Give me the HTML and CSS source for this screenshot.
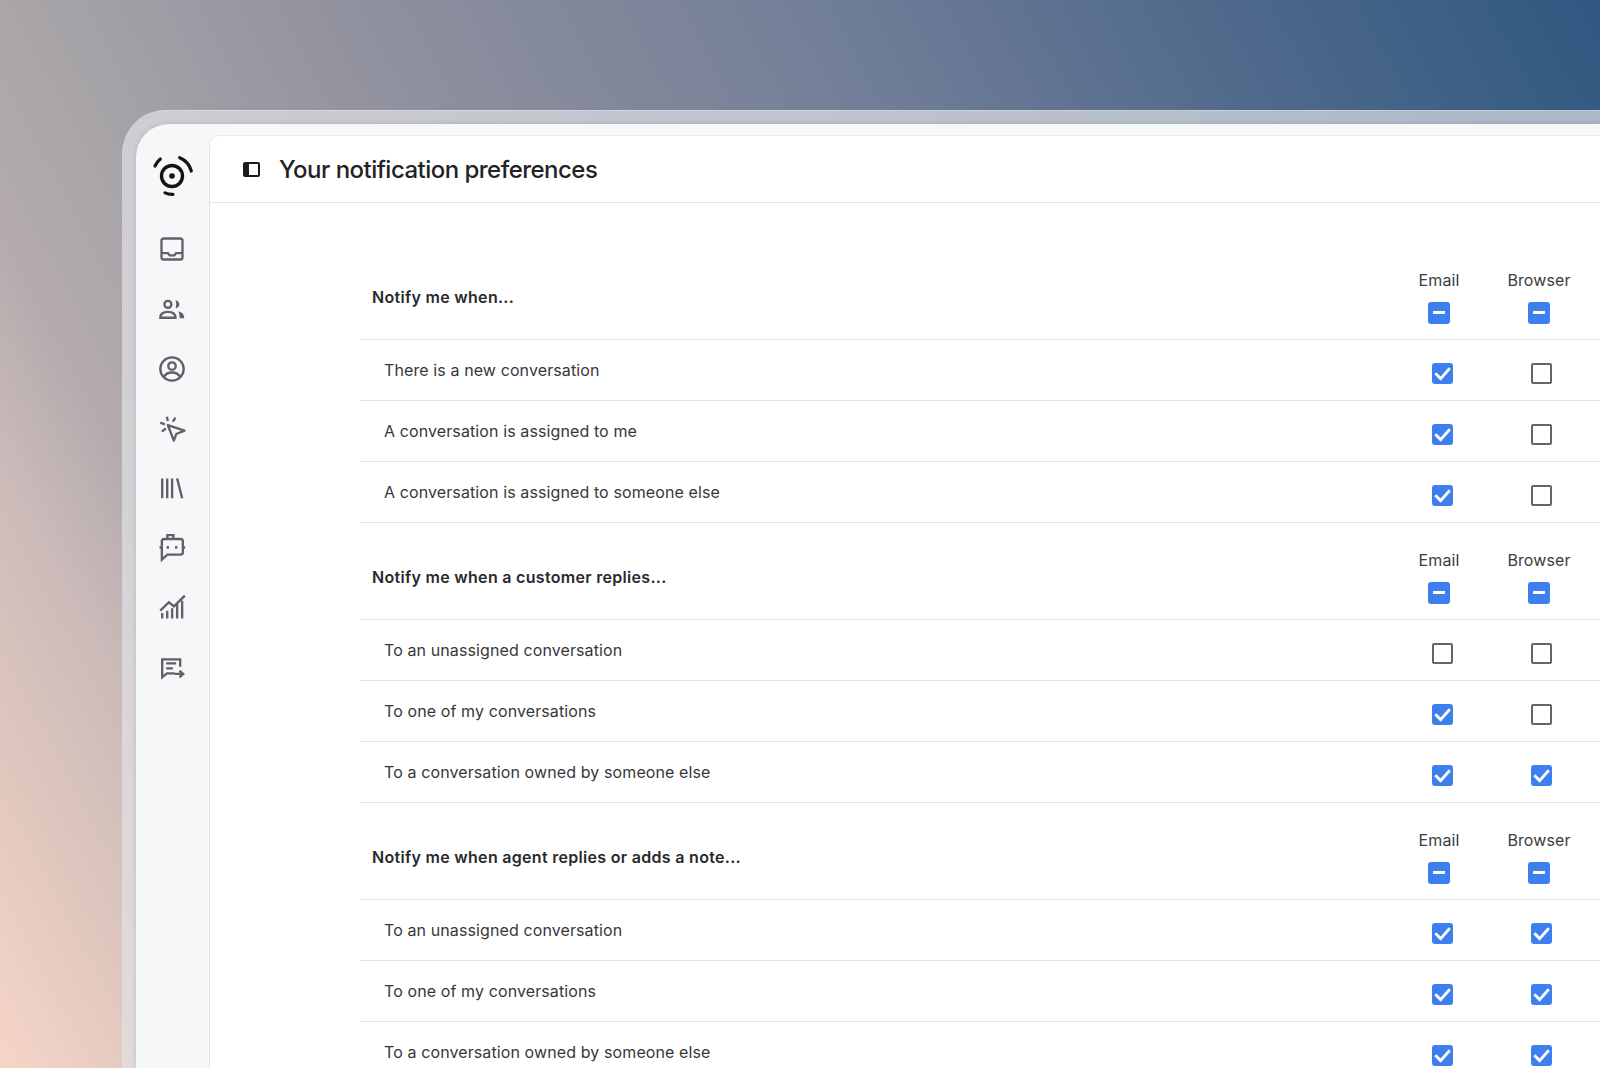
FILE: index.html
```html
<!DOCTYPE html>
<html lang="en">
<head>
<meta charset="utf-8">
<title>Your notification preferences</title>
<link rel="stylesheet" href="styles.css">
</head>
<body>
<svg class="defs" aria-hidden="true">
  <symbol id="tick" viewBox="0 0 21 21"><path d="M3.300 10.300l5.300 5.300L17.800 5.300" fill="none" stroke="#fff" stroke-width="2.800"/></symbol>
</svg>
<div class="frame">
  <div class="app">
    <nav class="sidebar">
      <svg class="logo" viewBox="-22 -22 44 44" fill="none" stroke="#141416" stroke-linecap="round">
        <circle r="10.500" stroke-width="3.400"/>
        <circle r="2.800" fill="#141416" stroke="none"/>
        <path d="M7.700-18.300A20 20 0 0 1 19.300-5" stroke-width="3.200"/>
        <path d="M-17-10A20 20 0 0 1-11.700-17" stroke-width="3.200"/>
        <path d="M-7 16.900A18 18 0 0 0 1 18.300" stroke-width="3.200"/>
      </svg>
      <svg class="icon" viewBox="0 0 24 24"><rect x="3" y="3" width="18" height="18" rx="2"/><path d="M3 15.500h5.500l1.500 2h4l1.500-2H21"/></svg>
      <svg class="icon" viewBox="0 0 24 24"><circle cx="8.500" cy="8" r="3"/><path d="M2 19.500c0-3.500 3-5 6.500-5s6.500 1.500 6.500 5z"/><path d="M15 4.500c2.200 .5 3.300 1.800 3.300 3.500s-1.100 3-3.300 3.500c.8-2.300 .8-4.700 0-7z" class="solid"/><path d="M17.500 14c3 .8 5 2.500 5 6h-4c0-2.500-.2-4-1-6z" class="solid"/></svg>
      <svg class="icon" viewBox="0 0 24 24"><circle cx="12" cy="12" r="10"/><circle cx="12" cy="9.500" r="3.200"/><path d="M5 19c1.500-3 4-4 7-4s5.500 1 7 4"/></svg>
      <svg class="icon" viewBox="0 0 24 24"><path d="M8.400 8.600l14.300 4.800-7.100 2.900-2 5.700z" stroke-linejoin="round"/><path d="M7.600 1.400l.8 3.700M1.900 6.600l4 1.400M3.300 14.300l3.400-2.900M15 2.300l-2.300 3.400"/></svg>
      <svg class="icon" viewBox="0 0 24 24"><path d="M3.600 2.900V20M7.900 2.900V20M12.100 2.900V20M16.400 2.900L20.700 20"/></svg>
      <svg class="icon" viewBox="0 0 24 24"><path d="M5 4.300h14.300a2 2 0 0 1 2 2v9.400a2 2 0 0 1-2 2H8L3.300 22V6.300a2 2 0 0 1 2-2z"/><path d="M8 4.300V.9h5.200v3.400M1.300 11.600h2M21.300 11.600h2M8.400 10.200v2.400M15.600 10.200v2.400"/></svg>
      <svg class="icon" viewBox="0 0 24 24"><path d="M1.900 14.300l7.500-7.200 4.300 3.500L23 1.400M3.600 16.300v4.600M7.900 14.300v6.600M12.100 12.300v8.600M16.400 8.600v12.300M20.700 5.700v15.200"/></svg>
      <svg class="icon" viewBox="0 0 24 24"><path d="M19 10.900V4.600H3.600V20l4-3.400h6.500M7 8h8.600M7 12.300h5.700M14.100 17.100h7.200M18.400 14.300l3.200 2.800-3.200 2.900"/></svg>
    </nav>
    <main class="panel">
      <header class="topbar">
        <span class="toggle"><span class="toggle-fill"></span></span>
        <h1 class="title">Your notification preferences</h1>
      </header>
      <div class="content">

        <section class="group">
          <div class="head">
            <div class="head-label">Notify me when...</div>
            <div class="col"><span>Email</span><span class="cb on"><i class="dash"></i></span></div>
            <div class="col"><span>Browser</span><span class="cb on"><i class="dash"></i></span></div>
          </div>
          <div class="row"><div class="label">There is a new conversation</div><span class="cb on"><svg><use href="#tick"/></svg></span><span class="cb"></span></div>
          <div class="row"><div class="label">A conversation is assigned to me</div><span class="cb on"><svg><use href="#tick"/></svg></span><span class="cb"></span></div>
          <div class="row"><div class="label">A conversation is assigned to someone else</div><span class="cb on"><svg><use href="#tick"/></svg></span><span class="cb"></span></div>
        </section>

        <section class="group">
          <div class="head">
            <div class="head-label">Notify me when a customer replies...</div>
            <div class="col"><span>Email</span><span class="cb on"><i class="dash"></i></span></div>
            <div class="col"><span>Browser</span><span class="cb on"><i class="dash"></i></span></div>
          </div>
          <div class="row"><div class="label">To an unassigned conversation</div><span class="cb"></span><span class="cb"></span></div>
          <div class="row"><div class="label">To one of my conversations</div><span class="cb on"><svg><use href="#tick"/></svg></span><span class="cb"></span></div>
          <div class="row"><div class="label">To a conversation owned by someone else</div><span class="cb on"><svg><use href="#tick"/></svg></span><span class="cb on"><svg><use href="#tick"/></svg></span></div>
        </section>

        <section class="group">
          <div class="head">
            <div class="head-label">Notify me when agent replies or adds a note...</div>
            <div class="col"><span>Email</span><span class="cb on"><i class="dash"></i></span></div>
            <div class="col"><span>Browser</span><span class="cb on"><i class="dash"></i></span></div>
          </div>
          <div class="row"><div class="label">To an unassigned conversation</div><span class="cb on"><svg><use href="#tick"/></svg></span><span class="cb on"><svg><use href="#tick"/></svg></span></div>
          <div class="row"><div class="label">To one of my conversations</div><span class="cb on"><svg><use href="#tick"/></svg></span><span class="cb on"><svg><use href="#tick"/></svg></span></div>
          <div class="row"><div class="label">To a conversation owned by someone else</div><span class="cb on"><svg><use href="#tick"/></svg></span><span class="cb on"><svg><use href="#tick"/></svg></span></div>
        </section>

      </div>
    </main>
  </div>
</div>
</body>
</html>
```
FILE: styles.css
```css
* { box-sizing: border-box; }
html, body { margin: 0; height: 100%; overflow: hidden; }
body {
  font-family: Inter, "Liberation Sans", sans-serif;
  color: #29292c;
  padding: 110px 0 0 122px;
  background: linear-gradient(62deg, #f7d5c8 0%, #e3c9bf 6.600%, #c9b9b8 15.500%, #b4abad 20.500%, #aaa6a9 26%, #8d8f9d 44%, #737f98 63%, #516a8c 81%, #2f5880 100%);
}
.defs { position: absolute; width: 0; height: 0; }
.frame {
  width: 1478px;
  height: 958px;
  padding: 14px 0 0 14px;
  border-radius: 44px 0 0 0;
  background: rgba(224, 226, 230, .69);
  box-shadow: inset 0 1px 0 rgba(255, 255, 255, .25);
}
.app {
  display: flex;
  height: 100%;
  background: #f6f7f9;
  border-radius: 33px 0 0 0;
  padding-top: 11px;
  box-shadow: 0 0 6px rgba(0, 0, 0, .12);
}
.sidebar {
  width: 73px;
  flex: none;
  display: flex;
  flex-direction: column;
  align-items: center;
  padding-right: .5px;
}
.logo { width: 44px; height: 44px; margin-top: 19px; margin-bottom: 37px; }
.icon {
  width: 28px;
  height: 28px;
  margin-bottom: 31.900px;
  fill: none;
  stroke: #606066;
  stroke-width: 2;
}
.icon .solid { fill: #606066; stroke: none; }
.panel {
  flex: 1;
  background: #fff;
  border-top: 1px solid #e9eaec;
  border-left: 1px solid #e3e4e7;
  border-radius: 10px 0 0 0;
  overflow: hidden;
}
.topbar {
  height: 67px;
  display: flex;
  align-items: center;
  gap: 19px;
  padding-left: 33px;
  border-bottom: 1px solid #e3e4e7;
}
.toggle {
  width: 17px;
  height: 15px;
  border: 2px solid #1b1b1d;
  border-radius: 2px;
  display: flex;
}
.toggle-fill { width: 4px; background: #1b1b1d; }
.title { margin: 0; font-size: 24px; font-weight: 550; letter-spacing: -.52px; color: #232326; }
.content { padding: 40px 0 0 150px; }
.head {
  height: 96.900px;
  display: grid;
  grid-template-columns: 1fr 100px 100px;
  align-items: center;
  padding: 12px 11px 0 12px;
  border-bottom: 1px solid #e3e4e7;
}
.head-label { font-size: 16px; font-weight: 600; letter-spacing: .3px; padding-top: 1px; }
.col {
  display: flex;
  flex-direction: column;
  align-items: center;
  gap: 12px;
  font-size: 16px;
  letter-spacing: .1px;
  color: #3c3c40;
}
.row {
  height: 61px;
  display: grid;
  grid-template-columns: 1fr 99px 99px;
  align-items: center;
  justify-items: center;
  padding: 0 9px 0 24px;
  border-bottom: 1px solid #e3e4e7;
}
.row .cb { width: 21px; height: 21px; margin-top: 7px; }
.label { font-size: 16px; color: #37373b; justify-self: start; letter-spacing: .105px; padding-top: 1px; }
.cb {
  width: 22px;
  height: 22px;
  border: 2.500px solid #666669;
  border-radius: 2px;
  display: block;
}
.cb.on { background: #3d7fee; border: 0; border-radius: 3px; position: relative; }
.cb svg { width: 100%; height: 100%; display: block; }
.dash {
  position: absolute;
  left: 5px;
  right: 5px;
  top: 9.500px;
  height: 3px;
  background: #fff;
}
```
